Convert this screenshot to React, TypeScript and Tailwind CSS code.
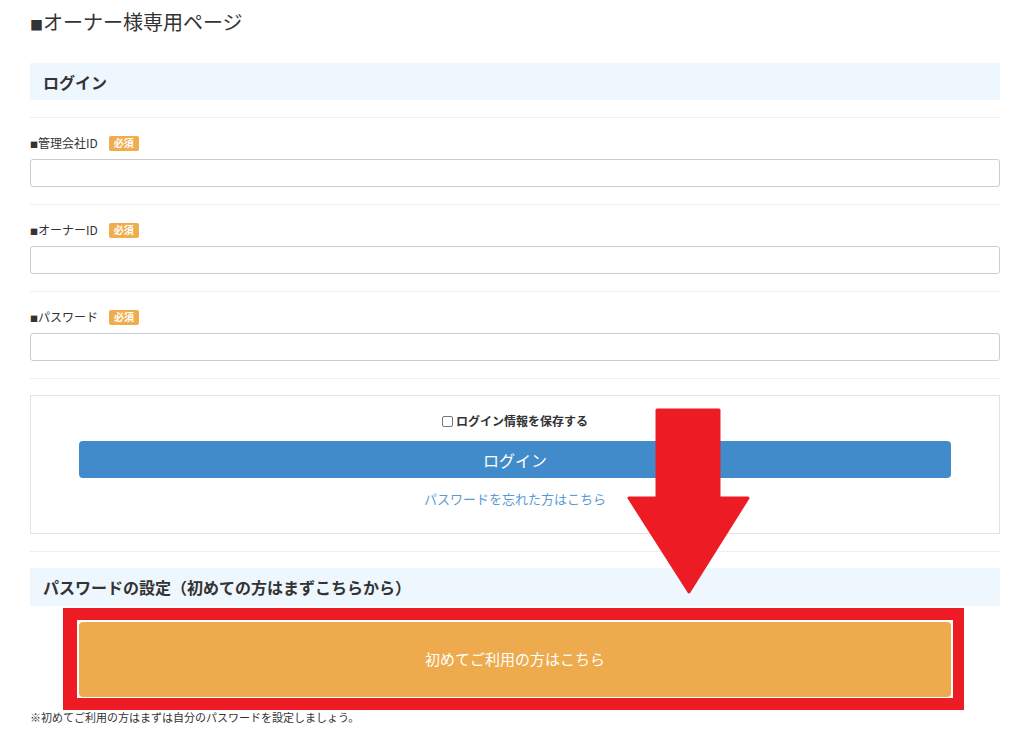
const FONT = "font-['Noto_Sans_CJK_JP','Liberation_Sans',sans-serif]";

function Required() {
  return (
    <span className="ml-[11px] inline-flex h-[15px] items-center rounded-[2px] bg-[#f0ad4e] px-[5px] text-[10px] font-bold leading-none text-white">
      必須
    </span>
  );
}

function Field({ label }: { label: string }) {
  return (
    <div>
      <div className="h-px bg-[#eeeeee]" />
      <div className="mt-[18px] flex h-[14px] items-center text-[12px] text-[#333333]">
        <span>
          <span className="text-[8px] leading-none">■</span>
          {label}
        </span>
        <Required />
      </div>
      <input
        type="text"
        className="mt-[9px] mb-[17px] block h-[28px] w-full rounded-[3px] border border-[#cccccc] bg-white px-2 text-[13px] outline-none"
      />
    </div>
  );
}

function Arrow() {
  return (
    <svg
      className="absolute left-[627px] top-[408px]"
      width="124"
      height="187"
      viewBox="0 0 124 187"
    >
      <path
        d="M30 2 H92 V90 H121 L62 184 L2 90 H30 Z"
        fill="#ed1c24"
        stroke="#ed1c24"
        strokeWidth="3"
        strokeLinejoin="round"
      />
    </svg>
  );
}

export default function App() {
  return (
    <div className={`relative min-h-[730px] bg-white ${FONT}`}>
      <div className="w-[970px] pl-[30px] box-content">
        <h1 className="flex h-[34px] items-baseline pt-[10px] text-[20px] font-normal leading-[24px] text-[#333333]">
          <span className="text-[13px]">■</span>
          <span>オーナー様専用ページ</span>
        </h1>

        <div className="mt-[29px] flex h-[37px] items-center bg-[#eef6fe] pl-[13px] text-[16px] font-bold text-[#333333]">
          ログイン
        </div>

        <div className="mt-[17px]">
          <Field label="管理会社ID" />
          <Field label="オーナーID" />
          <Field label="パスワード" />
          <div className="h-px bg-[#eeeeee]" />
        </div>

        <div className="mt-[16px] h-[139px] border border-[#e2e2e2] px-[48px] pt-[17px]">
          <label className="flex h-[16px] items-center justify-center text-[12px] font-bold text-[#333333]">
            <span className="mr-[3px] inline-block h-[11px] w-[11px] rounded-[2px] border-[1.5px] border-[#777777]" />
            ログイン情報を保存する
          </label>
          <button className="mt-[12px] flex h-[37px] w-full items-center justify-center rounded-[4px] bg-[#428bca] text-[16px] text-white">
            ログイン
          </button>
          <div className="mt-[12px] text-center text-[13px] leading-[18px] text-[#5b9bd5]">
            パスワードを忘れた方はこちら
          </div>
        </div>

        <div className="mt-[17px] h-px bg-[#eeeeee]" />

        <div className="mt-[16px] flex h-[38px] items-center bg-[#eef6fe] pl-[13px] text-[16px] font-bold text-[#333333]">
          パスワードの設定（初めての方はまずこちらから）
        </div>

        <div className="mt-[2px] ml-[33px] w-[901px] border-y-[12px] border-l-[14px] border-r-[11px] border-[#ed1c24] bg-white pt-[2px] pb-[1px] pl-[2px] pr-[2px]">
          <button className="flex h-[75px] w-full items-center justify-center rounded-[4px] bg-[#eeab4e] text-[15px] text-white">
            初めてご利用の方はこちら
          </button>
        </div>

        <p className="text-[11px] leading-[14px] text-[#333333]">
          ※初めてご利用の方はまずは自分のパスワードを設定しましょう。
        </p>
      </div>
      <Arrow />
    </div>
  );
}
